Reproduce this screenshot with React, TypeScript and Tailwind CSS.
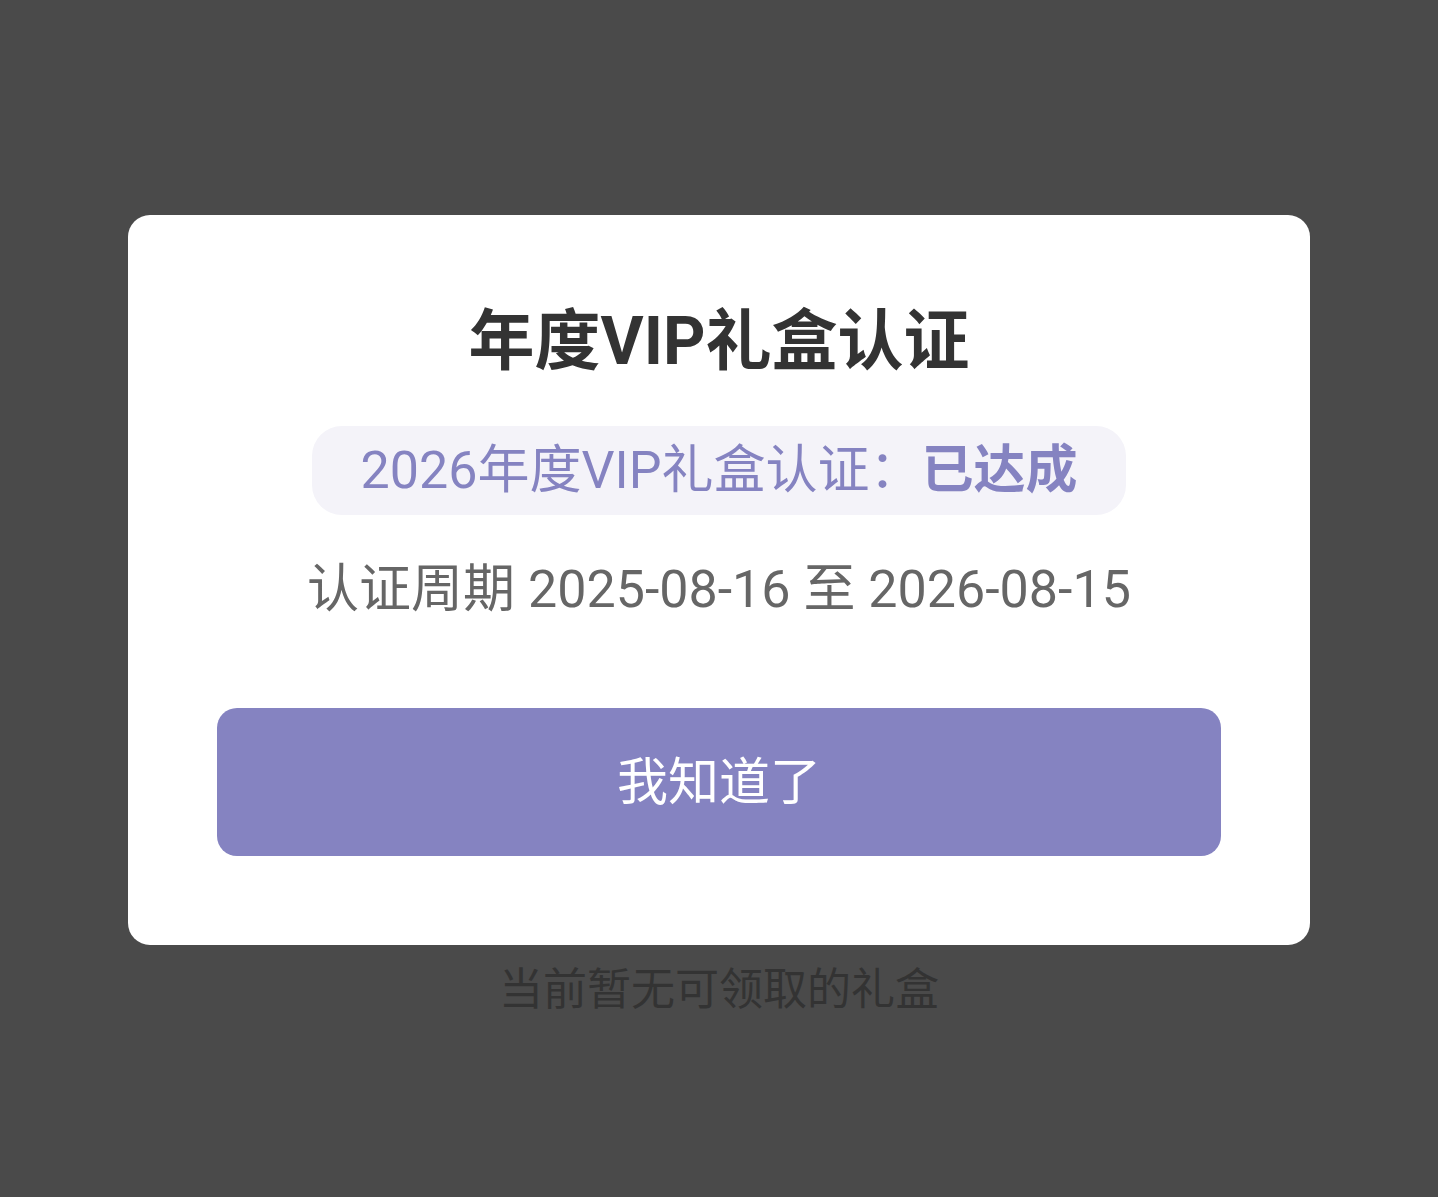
import React from 'react';

const font = { fontFamily: 'Roboto, "Noto Sans CJK SC", sans-serif' };

export default function App() {
  return (
    <div className="min-h-[1197px] w-full bg-[#4a4a4a] pt-[215px] flex flex-col items-center" style={font}>
      <div className="w-[1182px] bg-white rounded-[22px] px-[89px] pt-[94px] pb-[89px] flex flex-col items-center">
        <h1 className="text-[66px] leading-[66px] font-bold text-[#333333]">年度VIP礼盒认证</h1>
        <div className="mt-[51px] h-[89px] px-[49px] rounded-[30px] bg-[#f4f3f9] flex items-center text-[52px] leading-none text-[#8583c1]">
          <span>2026年度VIP礼盒认证：</span>
          <span className="font-bold">已达成</span>
        </div>
        <p className="mt-[45px] text-[52px] leading-[60px] text-[#666666]">认证周期 2025-08-16 至 2026-08-15</p>
        <button className="mt-[88px] w-full h-[148px] rounded-[20px] bg-[#8583c1] text-white text-[51px] leading-none">
          我知道了
        </button>
      </div>
      <p className="mt-[23px] text-[44px] leading-[44px] text-[#333333]">当前暂无可领取的礼盒</p>
    </div>
  );
}
